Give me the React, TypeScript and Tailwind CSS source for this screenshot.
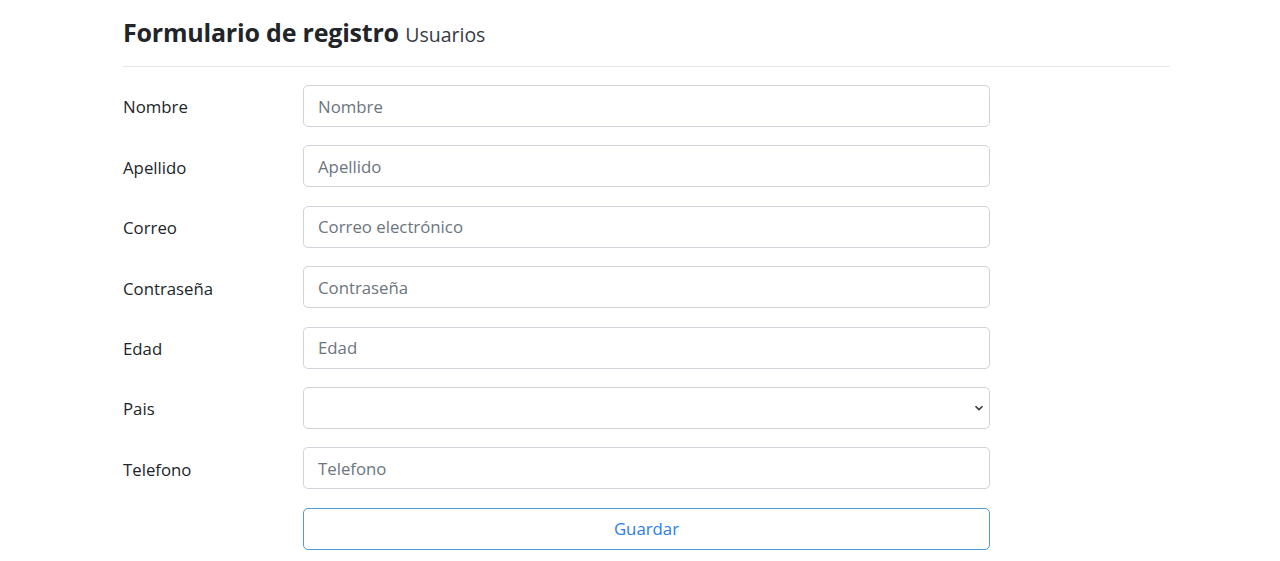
import { useState } from "react";

const fields = [
  { label: "Nombre", placeholder: "Nombre", type: "text" },
  { label: "Apellido", placeholder: "Apellido", type: "text" },
  { label: "Correo", placeholder: "Correo electrónico", type: "email" },
  { label: "Contraseña", placeholder: "Contraseña", type: "password" },
  { label: "Edad", placeholder: "Edad", type: "number" },
  { label: "Pais", placeholder: "", type: "select" },
  { label: "Telefono", placeholder: "Telefono", type: "text" },
];

function App() {
  const [pais, setPais] = useState("");

  return (
    <div
      className="min-h-[561px] bg-white text-[#212529]"
      style={{ fontFamily: '"Open Sans", "Noto Sans", sans-serif' }}
    >
      <div className="ml-[123px] w-[1047px] pt-[16px]">
        <h3 className="text-[25px] leading-[32px] font-bold tracking-[-0.2px]">
          Formulario de registro{" "}
          <small className="text-[19.5px] font-normal text-[#343a40] tracking-normal">Usuarios</small>
        </h3>
        <hr className="mt-[15px] border-t border-[#e4e6e8]" />

        <form className="mt-[18px] flex flex-col gap-[18.4px]">
          {fields.map((f) => (
            <div key={f.label} className="flex items-center">
              <label className="mt-[2px] w-[180px] text-[16.8px]">{f.label}</label>
              {f.type === "select" ? (
                <div className="relative w-[687px]">
                  <select
                    value={pais}
                    onChange={(e) => setPais(e.target.value)}
                    className="block h-[42px] w-full appearance-none rounded-[5px] border border-[#ced4da] bg-white px-[14px] text-[16.8px] outline-none"
                  >
                    <option value=""></option>
                    <option value="mx">México</option>
                    <option value="co">Colombia</option>
                    <option value="ar">Argentina</option>
                  </select>
                  <svg
                    className="pointer-events-none absolute right-[6px] top-[17px]"
                    width="10"
                    height="8"
                    viewBox="0 0 10 8"
                  >
                    <path d="M1.5 2.2 L5 5.6 L8.5 2.2" fill="none" stroke="#343a40" strokeWidth="1.6" />
                  </svg>
                </div>
              ) : (
                <input
                  type={f.type}
                  placeholder={f.placeholder}
                  className="block h-[42px] w-[687px] rounded-[5px] border border-[#ced4da] px-[14px] text-[16.8px] text-[#495057] outline-none placeholder:text-[#6c757d]"
                />
              )}
            </div>
          ))}
          <div className="flex">
            <div className="w-[180px]" />
            <button
              type="button"
              className="h-[42px] w-[687px] rounded-[5px] border border-[#4f9ad8] text-[16.8px] text-[#2b7de9]"
            >
              Guardar
            </button>
          </div>
        </form>
      </div>
    </div>
  );
}

export default App;
